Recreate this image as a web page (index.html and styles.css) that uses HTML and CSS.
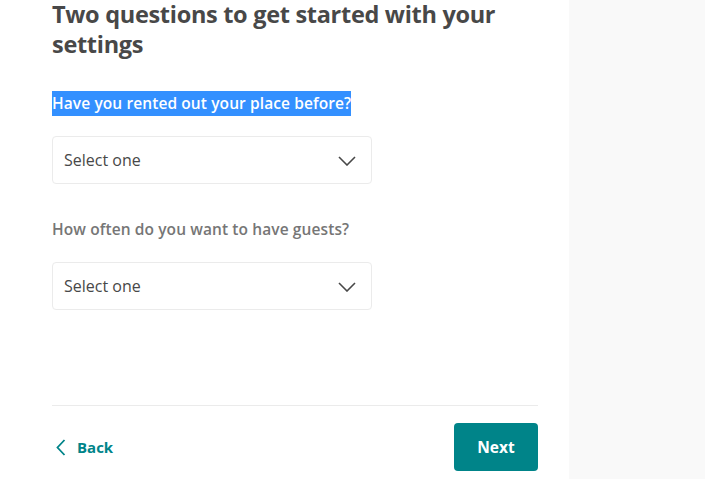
FILE: index.html
```html
<!DOCTYPE html>
<html>
<head>
<meta charset="utf-8">
<link rel="stylesheet" href="styles.css">
</head>
<body>
<div class="page">
  <main class="main">
    <h1 class="title">Two questions to get started with your settings</h1>
    <div class="field">
      <label class="label"><span class="selected">Have you rented out your place before?</span></label>
      <div class="select">
        <span>Select one</span>
        <svg class="chev" width="18" height="10" viewBox="0 0 18 10"><path d="M1 1l8 8 8-8" fill="none" stroke="#484848" stroke-width="1.6"/></svg>
      </div>
    </div>
    <div class="field">
      <label class="label muted">How often do you want to have guests?</label>
      <div class="select">
        <span>Select one</span>
        <svg class="chev" width="18" height="10" viewBox="0 0 18 10"><path d="M1 1l8 8 8-8" fill="none" stroke="#484848" stroke-width="1.6"/></svg>
      </div>
    </div>
    <div class="spacer"></div>
    <footer class="footer">
      <a class="back">
        <svg width="10" height="17" viewBox="0 0 10 17"><path d="M8.5 1L1.5 8.5l7 7.5" fill="none" stroke="#008489" stroke-width="1.8"/></svg>
        <span>Back</span>
      </a>
      <button class="next">Next</button>
    </footer>
  </main>
  <aside class="side"></aside>
</div>
</body>
</html>
```
FILE: styles.css
```css
html, body { margin: 0; padding: 0; height: 100%; }
body { font-family: "Open Sans", "Liberation Sans", sans-serif; color: #484848; background: #fff; overflow: hidden; }
.page { display: flex; height: 479px; }
.main { width: 486px; padding: 0 31px 8px 52px; display: flex; flex-direction: column; }
.side { flex: 1; background: #f9f9f9; }
.title { margin: -1px 0 0; font-size: 23.5px; line-height: 30px; font-weight: 700; color: #484848; letter-spacing: -0.3px; }
.field { margin-top: 35px; }
.title + .field { margin-top: 34px; }
.label { display: block; font-size: 15.5px; font-weight: 600; line-height: 21px; color: #484848; letter-spacing: 0.1px; }
.label.muted { color: #767676; }
.selected { background: #3390ff; color: #fff; padding: 1px 0 2px; }
.select { margin-top: 22px; height: 46px; border: 1px solid #ebebeb; border-radius: 4px; display: flex; align-items: center; justify-content: space-between; padding: 0 15px 0 11px; width: 292px; font-size: 16px; color: #484848; }
.chev { margin-top: 1px; }
.spacer { flex: 1; }
.footer { border-top: 1px solid #ebebeb; padding-top: 17px; display: flex; justify-content: space-between; align-items: center; }
.back { display: flex; align-items: center; gap: 11px; color: #008489; font-weight: 700; font-size: 15px; padding-left: 4px; }
.next { background: #008489; color: #fff; border: 0; border-radius: 4px; width: 84px; height: 48px; font-family: inherit; font-weight: 700; font-size: 15.5px; }
```
